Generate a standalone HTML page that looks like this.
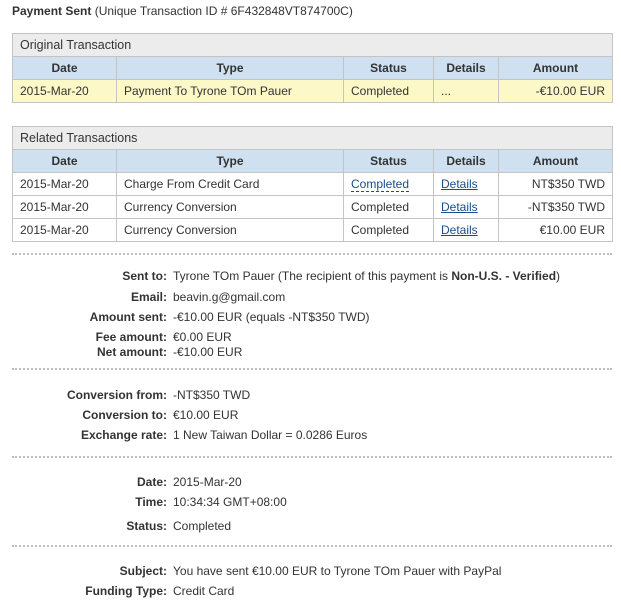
<!DOCTYPE html>
<html><head><style>
*{margin:0;padding:0;box-sizing:border-box}
body{width:621px;height:600px;background:#fff;font-family:"Liberation Sans",Arial,sans-serif;font-size:12px;color:#333;position:relative;overflow:hidden}
.a{position:absolute;line-height:14px;white-space:nowrap}
table{position:absolute;left:12px;width:601px;border-collapse:collapse}
td,th{border:1px solid #c4c4c4;height:23px;padding:0 7px;font-size:12px;white-space:nowrap}
th{background:#cfe0f0;font-weight:bold;text-align:center}
.t td{background:#ececec;text-align:left;font-size:12.5px}
.y td{background:#fdf8c8}
.r{text-align:right}
a{color:#1a4c8a;text-decoration:underline}
.dash{border-bottom:1px dashed #1a4c8a;color:#1a4c8a}
.sep{position:absolute;left:12px;width:600px;border-top:2px dotted #bdbdbd;height:0}
.l{position:absolute;right:454px;font-weight:bold;line-height:14px;white-space:nowrap}
.v{position:absolute;left:173px;line-height:14px;white-space:nowrap}
</style></head><body>
<div class="a" style="left:12px;top:4px"><b>Payment Sent</b> (Unique Transaction ID # 6F432848VT874700C)</div>
<table style="top:33px">
<tr class="t"><td colspan="5">Original Transaction</td></tr>
<tr><th style="width:104px">Date</th><th style="width:227px">Type</th><th style="width:90px">Status</th><th style="width:65px">Details</th><th>Amount</th></tr>
<tr class="y"><td>2015-Mar-20</td><td>Payment To Tyrone TOm Pauer</td><td>Completed</td><td>...</td><td class="r">-€10.00 EUR</td></tr>
</table>
<table style="top:126px">
<tr class="t"><td colspan="5">Related Transactions</td></tr>
<tr><th style="width:104px">Date</th><th style="width:227px">Type</th><th style="width:90px">Status</th><th style="width:65px">Details</th><th>Amount</th></tr>
<tr><td>2015-Mar-20</td><td>Charge From Credit Card</td><td><span class="dash">Completed</span></td><td><a>Details</a></td><td class="r">NT$350 TWD</td></tr>
<tr><td>2015-Mar-20</td><td>Currency Conversion</td><td>Completed</td><td><a>Details</a></td><td class="r">-NT$350 TWD</td></tr>
<tr><td>2015-Mar-20</td><td>Currency Conversion</td><td>Completed</td><td><a>Details</a></td><td class="r">€10.00 EUR</td></tr>
</table>
<div class="sep" style="top:253px"></div>
<div class="l" style="top:269px">Sent to:</div><div class="v" style="top:269px">Tyrone TOm Pauer (The recipient of this payment is <b>Non-U.S. - Verified</b>)</div>
<div class="l" style="top:290px">Email:</div><div class="v" style="top:290px">beavin.g@gmail.com</div>
<div class="l" style="top:310px">Amount sent:</div><div class="v" style="top:310px">-€10.00 EUR (equals -NT$350 TWD)</div>
<div class="l" style="top:330px">Fee amount:</div><div class="v" style="top:330px">€0.00 EUR</div>
<div class="l" style="top:345px">Net amount:</div><div class="v" style="top:345px">-€10.00 EUR</div>
<div class="sep" style="top:368px"></div>
<div class="l" style="top:388px">Conversion from:</div><div class="v" style="top:388px">-NT$350 TWD</div>
<div class="l" style="top:408px">Conversion to:</div><div class="v" style="top:408px">€10.00 EUR</div>
<div class="l" style="top:428px">Exchange rate:</div><div class="v" style="top:428px">1 New Taiwan Dollar = 0.0286 Euros</div>
<div class="sep" style="top:456px"></div>
<div class="l" style="top:475px">Date:</div><div class="v" style="top:475px">2015-Mar-20</div>
<div class="l" style="top:495px">Time:</div><div class="v" style="top:495px">10:34:34 GMT+08:00</div>
<div class="l" style="top:519px">Status:</div><div class="v" style="top:519px">Completed</div>
<div class="sep" style="top:545px"></div>
<div class="l" style="top:564px">Subject:</div><div class="v" style="top:564px">You have sent €10.00 EUR to Tyrone TOm Pauer with PayPal</div>
<div class="l" style="top:584px">Funding Type:</div><div class="v" style="top:584px">Credit Card</div>
</body></html>
